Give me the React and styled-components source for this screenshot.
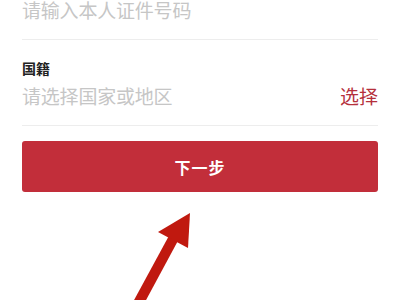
import React from "react";
import styled, { createGlobalStyle } from "styled-components";

const GlobalStyle = createGlobalStyle`
  html, body {
    margin: 0;
    padding: 0;
    background: #ffffff;
    font-family: "Noto Sans CJK SC", "Noto Sans", sans-serif;
  }
`;

const Page = styled.div`
  position: relative;
  width: 400px;
  height: 300px;
  overflow: hidden;
  padding: 0 22px;
  box-sizing: border-box;
`;

const Field = styled.div`
  display: flex;
  flex-direction: column;
  gap: 11px;
  padding: ${(p) => (p.$first ? "0 0 20px" : "21px 0 20px")};
  border-bottom: 1px solid #ededed;
`;

const Label = styled.div`
  font-size: 14px;
  line-height: 14px;
  font-weight: 700;
  color: #222222;
`;

const Row = styled.div`
  display: flex;
  align-items: center;
  justify-content: space-between;
`;

const Value = styled.div`
  font-size: 19px;
  line-height: 19px;
  color: #c6c6c6;
  letter-spacing: -0.2px;
`;

const Pick = styled.div`
  font-size: 19px;
  line-height: 19px;
  color: #b5303b;
`;

const NextButton = styled.button`
  display: flex;
  align-items: center;
  justify-content: center;
  width: 100%;
  height: 51px;
  margin-top: 15px;
  border: none;
  border-radius: 3px;
  background: #c22e3a;
  color: #ffffff;
  font-family: inherit;
  font-size: 16px;
  font-weight: 700;
  letter-spacing: 1px;
`;

const Arrow = styled.svg`
  position: absolute;
  left: 0;
  top: 0;
  pointer-events: none;
`;

export default function App() {
  return (
    <>
      <GlobalStyle />
      <Page>
        <Field $first>
          <Row>
            <Value>请输入本人证件号码</Value>
          </Row>
        </Field>
        <Field>
          <Label>国籍</Label>
          <Row>
            <Value>请选择国家或地区</Value>
            <Pick>选择</Pick>
          </Row>
        </Field>
        <NextButton>下一步</NextButton>
        <Arrow width="400" height="300" viewBox="0 0 400 300">
          <polygon points="133,302 145,302 180,237 171,232" fill="#c0190f" />
          <polygon points="190,213 158,232 188,248" fill="#c0190f" />
        </Arrow>
      </Page>
    </>
  );
}
